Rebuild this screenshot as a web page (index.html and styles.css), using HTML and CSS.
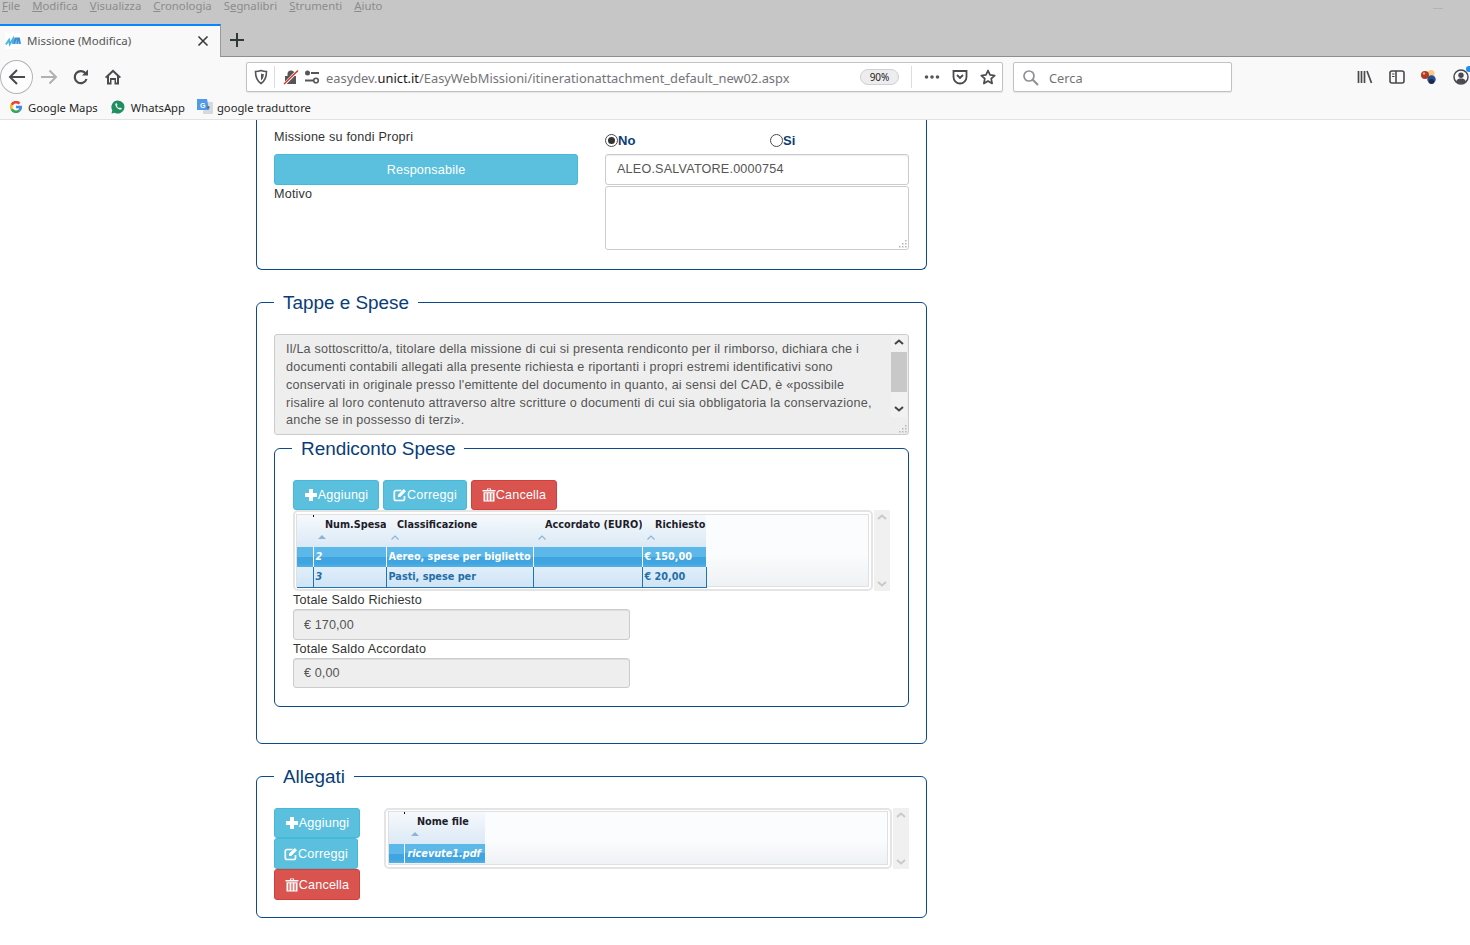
FILE: index.html
```html
<!DOCTYPE html>
<html lang="it">
<head>
<meta charset="utf-8">
<title>Missione (Modifica)</title>
<link rel="stylesheet" href="styles.css">
</head>
<body>
<svg class="defs" width="0" height="0" aria-hidden="true">
  <symbol id="i-plus" viewBox="0 0 14 14"><path d="M5 1h4v4h4v4H9v4H5V9H1V5h4z" fill="currentColor"/></symbol>
  <symbol id="i-edit" viewBox="0 0 14 14"><path d="M11.5 8v2.8A1.7 1.7 0 0 1 9.800 12.500H3A1.700 1.700 0 0 1 1.300 10.800V4.200A1.700 1.700 0 0 1 3 2.500h5.500" fill="none" stroke="currentColor" stroke-width="1.700"/><path d="M5 6.800 10.800 1 13 3.200 7.200 9H5z" fill="currentColor"/></symbol>
  <symbol id="i-trash" viewBox="0 0 14 14"><path d="M5 .5h4V2h4.500v1.400H.5V2H5zM6 1.300V2h2v-.7zM1.500 4.200h11v9.300h-11zM3.300 5.200v7.300h1.200V5.200zM6.400 5.200v7.300h1.200V5.200zM9.500 5.200v7.300h1.200V5.200z" fill="currentColor" fill-rule="evenodd"/></symbol>
  <symbol id="i-up" viewBox="0 0 10 6"><path d="M1 5l4-3.500L9 5" fill="none" stroke="currentColor" stroke-width="2"/></symbol>
  <symbol id="i-down" viewBox="0 0 10 6"><path d="M1 1l4 3.500L9 1" fill="none" stroke="currentColor" stroke-width="2"/></symbol>
  <symbol id="i-sort" viewBox="0 0 8 4"><path d="M0 4l4-4 4 4z" fill="currentColor"/></symbol>
  <symbol id="i-sort-o" viewBox="0 0 8 5"><path d="M.5 4.500 4 1l3.500 3.500" fill="none" stroke="currentColor" stroke-width="1.200"/></symbol>
  <symbol id="i-grip" viewBox="0 0 9 9"><path d="M7 1h1.500v1.500H7zM4 4h1.500v1.500H4zM7 4h1.500v1.500H7zM1 7h1.500v1.500H1zM4 7h1.500v1.500H4zM7 7h1.500v1.500H7z" fill="#b5b5b5"/></symbol>
</svg>

<header class="browser">
  <div class="menubar">
    <span><u>F</u>ile</span><span><u>M</u>odifica</span><span><u>V</u>isualizza</span><span><u>C</u>ronologia</span><span>S<u>e</u>gnalibri</span><span><u>S</u>trumenti</span><span><u>A</u>iuto</span>
    <i class="win-min"></i>
  </div>
  <div class="tabbar">
    <div class="tab">
      <svg class="favicon" width="16" height="16" viewBox="0 0 16 16"><rect width="16" height="16" fill="#fff"/><path d="M.8 11.500 4 7l.8 4L8 6v5" fill="none" stroke="#4fb4e2" stroke-width="2"/><path d="M9.500 11l.8-5.500H14l1 5.500M12.300 6v5" fill="none" stroke="#3d8fd2" stroke-width="2"/></svg>
      <span class="tab-title">Missione (Modifica)</span>
      <svg class="tab-close" width="12" height="12" viewBox="0 0 12 12"><path d="M1.500 1.500l9 9M10.500 1.500l-9 9" stroke="#3a3a3a" stroke-width="1.600"/></svg>
    </div>
    <svg class="newtab" width="16" height="16" viewBox="0 0 16 16"><path d="M8 1v14M1 8h14" stroke="#2f3a33" stroke-width="2"/></svg>
  </div>
  <div class="toolbar">
    <div class="nav-back"><svg width="20" height="20" viewBox="0 0 20 20"><path d="M18 10H3M10 3l-7 7 7 7" fill="none" stroke="#4a4a4f" stroke-width="2"/></svg></div>
    <div class="nav-btn"><svg width="18" height="18" viewBox="0 0 18 18"><path d="M1 9h15M9.500 2.500 16 9l-6.500 6.500" fill="none" stroke="#b1b1b3" stroke-width="2"/></svg></div>
    <div class="nav-btn"><svg width="18" height="18" viewBox="0 0 18 18"><path d="M14.500 11a6 6 0 1 1-.8-5.300" fill="none" stroke="#4a4a4f" stroke-width="2.200"/><path d="M16 1.500v6h-6z" fill="#4a4a4f"/></svg></div>
    <div class="nav-btn"><svg width="18" height="18" viewBox="0 0 18 18"><path d="M9 1.500 1 9l1.200 1.200L3 9.500V16.500h4.500v-4.500h3v4.500H15V9.500l.8.700L17 9z M5 8l4-3.700L13 8v6.500h-1v-4.500H6v4.500H5z" fill="#4a4a4f" fill-rule="evenodd"/></svg></div>
    <div class="urlbar">
      <svg class="u-shield" width="16" height="16" viewBox="0 0 16 16"><path d="M8 1.500c2 .8 3.800 1 5.500 1 0 5.500-1.500 9.500-5.500 12-4-2.500-5.500-6.500-5.500-12 1.700 0 3.500-.2 5.500-1z" fill="none" stroke="#55555a" stroke-width="1.600"/><path d="M8 4.500c1 .4 1.800.5 2.800.5 0 3-.8 5-2.800 6.500z" fill="#55555a"/></svg>
      <i class="u-sep"></i>
      <svg class="u-lock" width="16" height="16" viewBox="0 0 16 16"><path d="M4.500 7V5a3.500 3.500 0 0 1 7 0v2H13v8H2V7z" fill="#55555a"/><path d="M1 15.500 15 1.500" stroke="#fff" stroke-width="3"/><path d="M1 15 15 1.500" stroke="#d8362a" stroke-width="1.500"/></svg>
      <svg class="u-perm" width="16" height="16" viewBox="0 0 16 16"><circle cx="3.500" cy="4" r="2.500" fill="#55555a"/><path d="M7 4h8" stroke="#55555a" stroke-width="2"/><path d="M1 11.500h8" stroke="#55555a" stroke-width="2"/><circle cx="12" cy="11.500" r="2.300" fill="none" stroke="#55555a" stroke-width="1.600"/></svg>
      <span class="u-text">easydev.<b>unict.it</b>/EasyWebMissioni/itinerationattachment_default_new02.aspx</span>
      <span class="u-zoom">90%</span>
      <i class="u-sep u-sep-r"></i>
      <svg class="u-act" width="16" height="16" viewBox="0 0 16 16"><circle cx="2.500" cy="8" r="1.800" fill="#55555a"/><circle cx="8" cy="8" r="1.800" fill="#55555a"/><circle cx="13.500" cy="8" r="1.800" fill="#55555a"/></svg>
      <svg class="u-act" width="16" height="16" viewBox="0 0 16 16"><path d="M1.500 2h13v6a6.500 6.500 0 0 1-13 0z" fill="none" stroke="#4a4a4f" stroke-width="1.800"/><path d="M5 6l3 3 3-3" fill="none" stroke="#4a4a4f" stroke-width="1.800"/></svg>
      <svg class="u-act" width="16" height="16" viewBox="0 0 16 16"><path d="M8 1.500l2 4.400 4.700.6-3.500 3.200.9 4.800L8 12.100l-4.100 2.400.9-4.800L1.300 6.500 6 5.900z" fill="none" stroke="#4a4a4f" stroke-width="1.700" stroke-linejoin="round"/></svg>
    </div>
    <div class="searchbar">
      <svg width="17" height="17" viewBox="0 0 17 17"><circle cx="7" cy="7" r="5" fill="none" stroke="#8f8f94" stroke-width="1.700"/><path d="M10.500 10.500 16 16" stroke="#8f8f94" stroke-width="2"/></svg>
      <span>Cerca</span>
    </div>
    <div class="tool-btn"><svg width="16" height="16" viewBox="0 0 16 16"><path d="M1.500 2v12M4.500 2v12M7.500 2v12M10 2l4.500 12" fill="none" stroke="#4a4a4f" stroke-width="1.700"/></svg></div>
    <div class="tool-btn"><svg width="16" height="16" viewBox="0 0 16 16"><rect x="1" y="2" width="14" height="12" rx="2" fill="none" stroke="#4a4a4f" stroke-width="1.600"/><path d="M7 2v12" stroke="#4a4a4f" stroke-width="1.600"/><path d="M3 5h2.500M3 7.500h2.500" stroke="#4a4a4f" stroke-width="1.200"/></svg></div>
    <div class="tool-btn"><svg width="18" height="16" viewBox="0 0 18 16"><circle cx="11" cy="4.500" r="3.500" fill="#f3cd86"/><circle cx="5" cy="6" r="4" fill="#b23a22"/><circle cx="11.500" cy="10.500" r="4.200" fill="#244f93"/><circle cx="11.500" cy="12.500" r="2.500" fill="#1d2b45"/><circle cx="4" cy="4.500" r="1.200" fill="#e7a38e"/></svg></div>
    <div class="tool-btn tool-account"><svg width="16" height="16" viewBox="0 0 16 16"><circle cx="8" cy="8" r="7" fill="none" stroke="#4a4a4f" stroke-width="1.500"/><circle cx="8" cy="6.300" r="2.700" fill="#4a4a4f"/><path d="M3 12.500c1-2.500 3-3 5-3s4 .5 5 3c-1.300 1.400-3 2-5 2s-3.700-.6-5-2z" fill="#4a4a4f"/></svg><i class="badge"></i></div>
  </div>
  <div class="bookmarks">
    <div class="bm bm-maps">
      <svg width="12" height="12" viewBox="2 2 20 20"><path d="M17.700 6.300A8 8 0 0 0 4.900 8.300" fill="none" stroke="#ea4335" stroke-width="4.400"/><path d="M4.900 8.300a8 8 0 0 0 0 7.400" fill="none" stroke="#fbbc05" stroke-width="4.400"/><path d="M4.900 15.700a8 8 0 0 0 12.800 2" fill="none" stroke="#34a853" stroke-width="4.400"/><path d="M17.700 17.700A8 8 0 0 0 20 12h-8" fill="none" stroke="#4285f4" stroke-width="4.400"/></svg>
      <span>Google Maps</span>
    </div>
    <div class="bm bm-wa">
      <svg width="14" height="14" viewBox="0 0 14 14"><path d="M7 .5a6.500 6.500 0 1 1-3.200 12.200L.5 13.500l.8-3.200A6.500 6.500 0 0 1 7 .5z" fill="#1f8f5f"/><path d="M4.500 3.500l1.200-.3.800 1.800-.7.800c.4 1 1.300 1.900 2.300 2.300l.8-.7 1.800.8-.3 1.200c-2.800 1-6.900-3-5.900-5.900z" fill="#fff"/></svg>
      <span>WhatsApp</span>
    </div>
    <div class="bm bm-tr">
      <svg width="16" height="16" viewBox="0 0 16 16"><rect x="6" y="3" width="10" height="12" fill="#d7d9de"/><path d="M0 0h10l2 11H0z" fill="#4f9be8"/><text x="3" y="8.500" class="tr-g">G</text><text x="10" y="12" class="tr-x">*</text></svg>
      <span>google traduttore</span>
    </div>
  </div>
</header>

<main class="page">
  <section class="panel-top">
    <div class="two-col">
      <div class="col">
        <div class="lbl-top">Missione su fondi Propri</div>
        <div class="btn btn-info btn-wide">Responsabile</div>
        <div class="lbl-motivo">Motivo</div>
      </div>
      <div class="col">
        <div class="radios">
          <div class="radio-item"><i class="radio radio-on"></i><span>No</span></div>
          <div class="radio-item"><i class="radio"></i><span>Si</span></div>
        </div>
        <div class="input">ALEO.SALVATORE.0000754</div>
        <div class="textarea"><svg class="grip" width="9" height="9"><use href="#i-grip"/></svg></div>
      </div>
    </div>
  </section>

  <fieldset class="fs fs-tappe">
    <legend>Tappe e Spese</legend>
    <div class="note">
      <p>Il/La sottoscritto/a, titolare della missione di cui si presenta rendiconto per il rimborso, dichiara che i<br>documenti contabili allegati alla presente richiesta e riportanti i propri estremi identificativi sono<br>conservati in originale presso l'emittente del documento in quanto, ai sensi del CAD, è «possibile<br>risalire al loro contenuto attraverso altre scritture o documenti di cui sia obbligatoria la conservazione,<br>anche se in possesso di terzi».</p>
      <div class="note-scroll">
        <svg class="sb-arrow" width="10" height="6"><use href="#i-up"/></svg>
        <i class="note-thumb"></i>
        <svg class="sb-arrow" width="10" height="6"><use href="#i-down"/></svg>
      </div>
      <svg class="grip" width="9" height="9"><use href="#i-grip"/></svg>
    </div>

    <fieldset class="fs fs-rend">
      <legend>Rendiconto Spese</legend>
      <div class="btn-row">
        <div class="btn btn-info btn-a"><svg width="14" height="14"><use href="#i-plus"/></svg>Aggiungi</div>
        <div class="btn btn-info btn-c"><svg width="14" height="14"><use href="#i-edit"/></svg>Correggi</div>
        <div class="btn btn-danger btn-d"><svg width="14" height="14"><use href="#i-trash"/></svg>Cancella</div>
      </div>
      <div class="grid-wrap">
        <div class="grid-box grid-spese">
          <div class="grid-in">
            <table class="gt gt-spese">
              <thead>
                <tr>
                  <th class="w1"></th>
                  <th class="w2 tick"><span>Num.Spesa</span><svg class="srt" width="8" height="4"><use href="#i-sort"/></svg></th>
                  <th class="w3"><span>Classificazione</span><svg class="srt" width="8" height="5"><use href="#i-sort-o"/></svg></th>
                  <th class="w4"><span>Accordato (EURO)</span><svg class="srt" width="8" height="5"><use href="#i-sort-o"/></svg></th>
                  <th class="w5"><span>Richiesto</span><svg class="srt" width="8" height="5"><use href="#i-sort-o"/></svg></th>
                </tr>
              </thead>
              <tbody>
                <tr class="sel"><td></td><td class="it">2</td><td>Aereo, spese per biglietto</td><td></td><td>€ 150,00</td></tr>
                <tr class="alt"><td></td><td class="it">3</td><td>Pasti, spese per</td><td></td><td>€ 20,00</td></tr>
              </tbody>
            </table>
          </div>
        </div>
        <div class="grid-sb">
          <svg width="10" height="6"><use href="#i-up"/></svg>
          <svg width="10" height="6"><use href="#i-down"/></svg>
        </div>
      </div>
      <div class="lbl">Totale Saldo Richiesto</div>
      <div class="input input-ro">€ 170,00</div>
      <div class="lbl lbl-2">Totale Saldo Accordato</div>
      <div class="input input-ro input-ro2">€ 0,00</div>
    </fieldset>
  </fieldset>

  <fieldset class="fs fs-allegati">
    <legend>Allegati</legend>
    <div class="att">
      <div class="att-btns">
        <div class="btn btn-info btn-s1"><svg width="14" height="14"><use href="#i-plus"/></svg>Aggiungi</div>
        <div class="btn btn-info btn-s2"><svg width="14" height="14"><use href="#i-edit"/></svg>Correggi</div>
        <div class="btn btn-danger btn-s1"><svg width="14" height="14"><use href="#i-trash"/></svg>Cancella</div>
      </div>
      <div class="grid-wrap grid-wrap-att">
        <div class="grid-box grid-att">
          <div class="grid-in">
            <table class="gt gt-att">
              <thead>
                <tr>
                  <th class="a1"></th>
                  <th class="a2 tick"><span>Nome file</span><svg class="srt" width="8" height="4"><use href="#i-sort"/></svg></th>
                </tr>
              </thead>
              <tbody>
                <tr class="sel"><td></td><td class="it">ricevute1.pdf</td></tr>
              </tbody>
            </table>
          </div>
        </div>
        <div class="grid-sb">
          <svg width="10" height="6"><use href="#i-up"/></svg>
          <svg width="10" height="6"><use href="#i-down"/></svg>
        </div>
      </div>
    </div>
  </fieldset>
</main>
</body>
</html>
```

FILE: styles.css
```css
* { box-sizing: border-box; }
html, body { margin: 0; height: 945px; overflow: hidden; background: #fff; }
body { font-family: "Liberation Sans", Arial, sans-serif; font-size: 12.6px; letter-spacing: .2px; color: #333; }
.defs { position: absolute; }
svg { display: block; flex: none; }

/* Browser chrome */
.browser { height: 120px; font-family: "Noto Sans", sans-serif; font-size: 11.5px; letter-spacing: 0; overflow: hidden; }
.menubar { height: 24px; background: #c6c6c6; color: #8c8c8c; display: flex; gap: 12px; padding-left: 2px; font-size: 11.35px; line-height: 12px; overflow: hidden; }
.win-min { width: 10px; height: 1px; background: #b3b3b3; margin: 8px 27px 0 auto; }
.tabbar { height: 33px; background: #c6c6c6; border-bottom: 1px solid #8f8f8f; display: flex; align-items: flex-start; }
.tab { width: 221px; height: 33px; flex: none; background: #f9f9fa; border-top: 2px solid #0a84ff; border-right: 1px solid #9a9a9a; display: flex; align-items: center; padding: 0 11px 2px 5px; color: #555; }
.tab-title { margin-left: 6px; flex: 1; }
.newtab { margin: 8px 0 0 8px; }
.toolbar { height: 35px; background: #f9f9fa; display: flex; align-items: flex-start; padding-top: 3px; }
.toolbar > * { flex: none; }
.nav-back { width: 33px; height: 34px; border: 1px solid #b4b4b4; border-radius: 50%; background: #fdfdfd; display: flex; align-items: center; justify-content: center; position: relative; z-index: 1; }
.nav-btn { width: 32px; height: 34px; display: flex; align-items: center; justify-content: center; }
.urlbar { width: 757px; height: 30px; margin: 2px 0 0 117px; background: #fff; border: 1px solid #c2c2c2; border-radius: 2px; display: flex; align-items: center; padding: 0 6px; box-shadow: 0 1px 1px rgba(0,0,0,.08); }
.u-sep { width: 1px; height: 22px; background: #dcdcde; margin-left: 5px; }
.u-lock { margin-left: 8px; }
.u-perm { margin-left: 5px; }
.u-text { margin-left: 6px; flex: 1; font-size: 12.87px; color: #74747a; white-space: nowrap; padding-top: 1px; }
.u-text b { font-weight: 400; color: #18181a; }
.u-zoom { width: 39px; height: 16px; border: 1px solid #d0d0d2; border-radius: 8px; background: #ededf0; font-size: 10px; line-height: 14px; text-align: center; color: #222; }
.u-sep-r { margin-left: 12px; }
.u-act { margin-left: 12px; }
.searchbar { width: 219px; height: 30px; margin: 2px 0 0 10px; background: #fff; border: 1px solid #c2c2c2; border-radius: 2px; display: flex; align-items: center; padding-left: 8px; color: #737373; font-size: 12.8px; gap: 10px; box-shadow: 0 1px 1px rgba(0,0,0,.08); }
.searchbar span { padding-top: 1px; }
.tool-btn { width: 32px; height: 34px; display: flex; align-items: center; justify-content: center; }
.searchbar + .tool-btn { margin-left: 117px; }
.tool-account { position: relative; }
.badge { position: absolute; left: 21px; top: 6px; width: 6px; height: 6px; border-radius: 50%; background: #1e90ee; }
.bookmarks { height: 28px; background: #f9f9fa; border-bottom: 1px solid #e2e2e4; display: flex; align-items: center; color: #1f1f1f; font-size: 11.25px; padding: 3px 0 0 10px; }
.bm { display: flex; align-items: center; white-space: nowrap; }
.bm-maps { gap: 6px; }
.bm-wa { gap: 6px; margin-left: 13px; }
.bm-tr { gap: 4px; margin-left: 12px; }
.tr-g { font: bold 7px "Liberation Sans", sans-serif; fill: #fff; }
.tr-x { font: bold 7px "Liberation Sans", sans-serif; fill: #555; }

/* Page */
.page { width: 671px; margin-left: 256px; }
.panel-top { height: 150px; border: 1px solid #0c4a8b; border-top: 0; border-radius: 0 0 6px 6px; padding: 7px 17px 0; }
.two-col { display: flex; gap: 27px; }
.col { width: 304px; }
.lbl-top { height: 27px; line-height: 20px; }
.lbl-motivo { line-height: 19px; }
.btn { display: flex; align-items: center; justify-content: center; color: #fff; border: 1px solid; border-radius: 3px; height: 31px; white-space: nowrap; }
.btn svg { color: #fff; }
.btn-info { background: #5bc0de; border-color: #46b8da; }
.btn-danger { background: #d9534f; border-color: #d43f3a; }
.btn-wide { width: 304px; }
.radios { height: 27px; display: flex; align-items: flex-start; padding-top: 4px; color: #0a3d78; font-weight: 700; font-size: 13px; letter-spacing: 0; }
.radio-item { width: 165px; flex: none; display: flex; align-items: center; line-height: 16px; }
.radio { width: 13px; height: 13px; border-radius: 50%; border: 1px solid #4a4a4a; background: #fff; position: relative; }
.radio-on::after { content: ""; position: absolute; left: 2px; top: 2px; width: 7px; height: 7px; border-radius: 50%; background: #333; }
.radio-item span { margin-top: 2px; }
.input { height: 31px; border: 1px solid #ccc; border-radius: 3px; padding: 0 11px 2px; display: flex; align-items: center; background: #fff; color: #555; box-shadow: inset 0 1px 1px rgba(0,0,0,.075); }
.textarea { height: 64px; margin-top: 1px; border: 1px solid #ccc; border-radius: 3px; position: relative; background: #fff; }
.grip { position: absolute; right: 1px; bottom: 1px; }

.fs { border: 1px solid #0c4a8b; border-radius: 6px; margin: 0; min-width: 0; }
.fs legend { font-size: 18.9px; line-height: 20px; letter-spacing: 0; color: #0a3d78; padding: 2px 9px 0; margin-left: 0; }
.fs-tappe { margin-top: 21px; padding: 21px 17px 36px; }
.note { height: 101px; background: #eee; border: 1px solid #ccc; border-radius: 3px; position: relative; display: flex; align-items: flex-start; justify-content: space-between; padding: 6px 1px 0 11px; color: #555; }
.note p { margin: 0; line-height: 17.85px; white-space: nowrap; }
.note-scroll { width: 16px; height: 82px; margin-top: -6px; background: #f1f1f1; display: flex; flex-direction: column; align-items: center; color: #444; padding-top: 4px; }
.note-thumb { width: 16px; height: 40px; background: #c8c8c8; margin: 7px 0 14px; flex: none; }
.sb-arrow { flex: none; }

.fs-rend { margin-top: 2px; padding: 21px 18px 18px; }
.fs-rend legend { margin-left: -1px; }
.btn-row { display: flex; gap: 4px; height: 30px; }
.btn-row .btn { height: 30px; }
.btn-a { width: 86px; }
.btn-c { width: 84px; }
.btn-d { width: 86px; }
.grid-wrap { display: flex; gap: 1px; height: 81px; margin-bottom: 1px; }
.grid-box { width: 580px; border: 2px solid #e4e4e4; border-radius: 5px; padding: 2px 2px 2px 1px; background: #fff; }
.grid-in { height: 100%; border: 1px solid #e0e0e0; background: linear-gradient(#fbfcfe 0 55%, #f6f8fa 70%, #eff2f5 100%); }
.grid-sb { width: 16px; background: #f0f0f0; color: #c9c9c9; display: flex; flex-direction: column; justify-content: space-between; align-items: center; padding: 4px 0; }
.gt { border-collapse: collapse; table-layout: fixed; font-family: "DejaVu Sans", Verdana, sans-serif; font-weight: 700; font-size: 9.7px; letter-spacing: 0; }
.gt-spese { width: 409px; }
.gt-att { width: 96px; }
.gt th { height: 32px; padding: 0 0 0 5px; vertical-align: top; text-align: left; color: #1d1d2b; background: linear-gradient(#f6f9fc, #dbe9f6); white-space: nowrap; position: relative; font-weight: 700; }
.gt th span { display: block; margin: 3px 0 0 7px; line-height: 13px; }
.gt th.w3 span { margin-left: 6px; }
.gt th.w5 span { margin-left: 8px; }
.srt { color: #8db3d6; margin-top: 4px; }
.tick::before { content: ""; position: absolute; left: 0; top: 0; width: 1px; height: 2px; background: #111; }
.gt td { height: 20px; padding: 0 0 1px 2px; white-space: nowrap; overflow: hidden; border-left: 1px solid; }
.gt td:first-child { border-left: 0; }
.gt .it { font-style: italic; }
.sel td { background: linear-gradient(#5db8ea 0 50%, #3fa4df 50% 80%, #55b0e4 100%); color: #fff; border-color: #fff; }
.alt td { background: linear-gradient(#e1eefa, #cfe4f5); color: #1f6fa8; border-color: #1f75b0; border-bottom: 1px solid #1f75b0; }
.alt td:last-child { border-right: 1px solid #1f75b0; }
.w1 { width: 16px; }
.w2 { width: 73px; }
.w3 { width: 147px; }
.w4 { width: 109px; }
.w5 { width: 64px; }
.lbl { line-height: 17px; }
.lbl-2 { margin-top: 1px; }
.input-ro { width: 337px; background: #eee; height: 31px; padding: 0 10px; letter-spacing: .1px; }
.input-ro2 { height: 30px; }

.fs-allegati { margin-top: 21px; padding: 21px 17px 17px; }
.att { display: flex; align-items: flex-start; }
.att-btns { width: 110px; flex: none; display: flex; flex-direction: column; align-items: flex-start; }
.btn-s1 { width: 86px; }
.btn-s2 { width: 84px; }
.att-btns .btn:first-child { height: 30px; }
.grid-wrap-att { height: 61px; margin-bottom: 0; }
.grid-box.grid-att { width: 508px; padding: 1px 2px 2px; }
.a1 { width: 15px; }
.a2 { width: 81px; }
.gt-att th { padding-left: 0; }
.gt-att th span { margin: 3px 0 0 13px; }
.gt-att .srt { margin-left: 7px; }
.gt-att td { height: 19px; padding-left: 3px; }
```
